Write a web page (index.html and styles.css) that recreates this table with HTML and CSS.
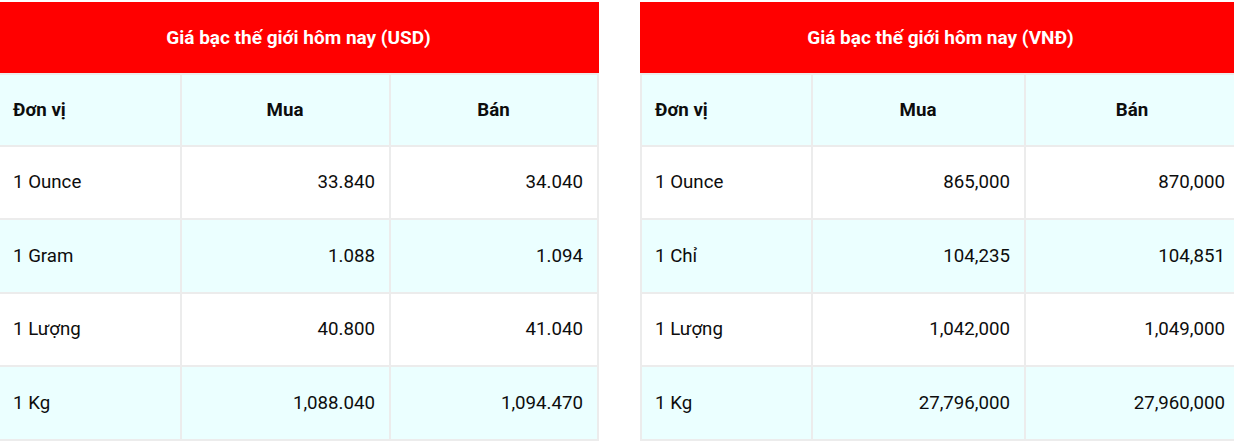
FILE: index.html
```html
<!DOCTYPE html>
<html lang="vi">
<head>
<meta charset="utf-8">
<title>Giá bạc thế giới hôm nay</title>
<link rel="stylesheet" href="styles.css">
</head>
<body>
<div class="page">
  <div class="tables">
    <table class="price-table usd">
      <colgroup><col class="c1"><col class="c2"><col class="c3"></colgroup>
      <thead>
        <tr><th colspan="3" class="title">Giá bạc thế giới hôm nay (USD)</th></tr>
        <tr class="head alt"><th class="unit">Đơn vị</th><th>Mua</th><th>Bán</th></tr>
      </thead>
      <tbody>
        <tr><td class="unit">1 Ounce</td><td>33.840</td><td>34.040</td></tr>
        <tr class="alt"><td class="unit">1 Gram</td><td>1.088</td><td>1.094</td></tr>
        <tr><td class="unit">1 Lượng</td><td>40.800</td><td>41.040</td></tr>
        <tr class="alt"><td class="unit">1 Kg</td><td>1,088.040</td><td>1,094.470</td></tr>
      </tbody>
    </table>
    <table class="price-table vnd">
      <colgroup><col class="c1"><col class="c2"><col class="c3"></colgroup>
      <thead>
        <tr><th colspan="3" class="title">Giá bạc thế giới hôm nay (VNĐ)</th></tr>
        <tr class="head alt"><th class="unit">Đơn vị</th><th>Mua</th><th>Bán</th></tr>
      </thead>
      <tbody>
        <tr><td class="unit">1 Ounce</td><td>865,000</td><td>870,000</td></tr>
        <tr class="alt"><td class="unit">1 Chỉ</td><td>104,235</td><td>104,851</td></tr>
        <tr><td class="unit">1 Lượng</td><td>1,042,000</td><td>1,049,000</td></tr>
        <tr class="alt"><td class="unit">1 Kg</td><td>27,796,000</td><td>27,960,000</td></tr>
      </tbody>
    </table>
  </div>
</div>
</body>
</html>
```
FILE: styles.css
```css
html, body {
  margin: 0;
  padding: 0;
  background: #ffffff;
}

.page {
  width: 1234px;
  height: 448px;
  overflow: hidden;
}

.tables {
  display: flex;
  gap: 41px;
  margin-left: -2px;
  padding-top: 2px;
  width: 1300px;
}

.price-table {
  flex: none;
  width: 601px;
  border-collapse: separate;
  border-spacing: 0;
  table-layout: fixed;
  font-family: Roboto, "Noto Sans", sans-serif;
  font-size: 18.7px;
  color: #0d0d0d;
}

.usd .c1 { width: 184px; }
.usd .c2 { width: 209px; }
.usd .c3 { width: 208px; }

.vnd .c1 { width: 173px; }
.vnd .c2 { width: 213px; }
.vnd .c3 { width: 215px; }

.price-table th,
.price-table td {
  border-right: 2px solid #ececec;
  border-bottom: 2px solid #ececec;
  padding: 0 14px 0 13px;
  box-sizing: border-box;
  vertical-align: middle;
  text-align: right;
  font-weight: 400;
}

.price-table th {
  font-weight: 700;
  text-align: center;
}

.price-table .unit {
  border-left: 2px solid #ececec;
  text-align: left;
}

.price-table .title {
  height: 71px;
  background: #ff0000;
  color: #ffffff;
  border: none;
  font-size: 19px;
  font-weight: 700;
  text-align: center;
  padding: 0;
}

.price-table .head th {
  border-top: 2px solid #ececec;
  height: 73.5px;
}

.price-table tr.alt th,
.price-table tr.alt td {
  background: #ebffff;
}

.price-table tbody td {
  height: 73.6px;
}
```
